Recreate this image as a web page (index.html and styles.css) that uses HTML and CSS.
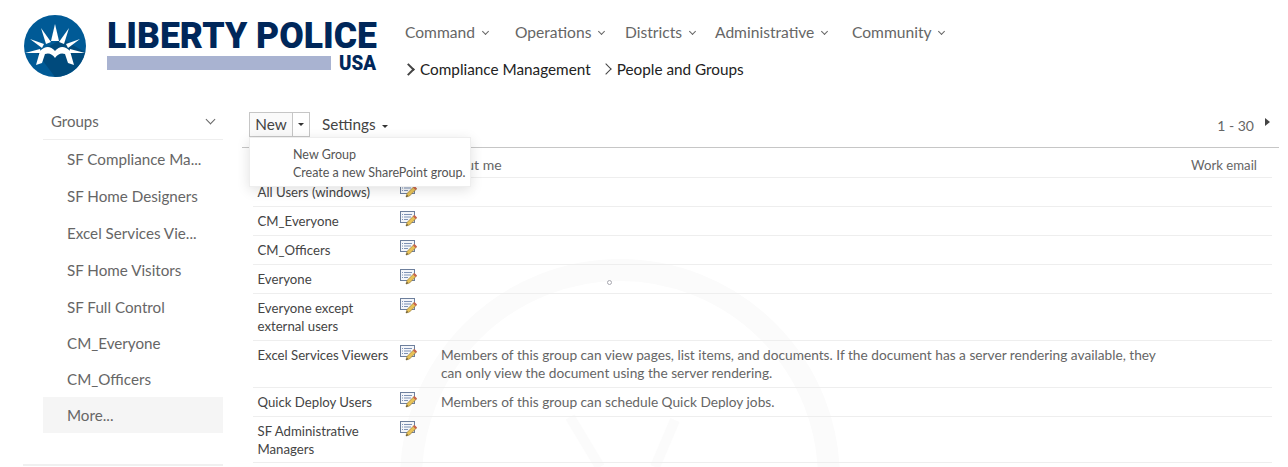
FILE: index.html
```html
<!DOCTYPE html>
<html lang="en">
  <head>
    <meta charset="UTF-8" />
    <title>People and Groups</title>
    <link rel="stylesheet" href="styles.css">
  </head>
  <body>
    <header class="top">
      <svg class="logo" width="380" height="72" viewBox="0 0 380 72">
        <circle cx="31" cy="31" r="31" fill="#005a96" />
        <path d="M13 38 L38 24 L61 37 A31 31 0 0 1 31 62 Z" fill="#004a7c" />
        <g fill="#fff">
          <path d="M31 9 L35 26 H27 Z" />
          <path d="M17 13 L27 27 L22 29 Z" />
          <path d="M45 13 L40 29 L35 27 Z" />
          <path d="M6 24 L20 29 L18 33 Z" />
          <path d="M56 24 L44 33 L42 29 Z" />
          <path d="M1 38 L16 34 L17 38 Z" />
          <path d="M61 38 L45 38 L46 34 Z" />
          <path d="M16 36 Q24 28 31 36 Q38 28 46 36 L50 50 L44 48 L41 39 Q35 37 31 43 Q27 37 21 39 L18 48 L12 50 Z" />
        </g>
        <text class="logo-name" x="83" y="33" textLength="270" lengthAdjust="spacingAndGlyphs">LIBERTY POLICE</text>
        <rect x="83" y="41" width="224" height="14" fill="#a9b3d1" />
        <text class="logo-usa" x="315" y="55" textLength="37" lengthAdjust="spacingAndGlyphs">USA</text>
      </svg>
      <div class="top-nav">
        <nav class="menu">
          <a class="menu-item w-command">Command <span class="caret"></span></a>
          <a class="menu-item w-operations">Operations <span class="caret"></span></a>
          <a class="menu-item w-districts">Districts <span class="caret"></span></a>
          <a class="menu-item w-admin">Administrative <span class="caret"></span></a>
          <a class="menu-item">Community <span class="caret"></span></a>
        </nav>
        <div class="crumbs">
          <span class="crumb-arrow thick"></span><span class="crumb">Compliance Management</span>
          <span class="crumb-arrow"></span><span class="crumb">People and Groups</span>
        </div>
      </div>
    </header>

    <div class="main">
      <aside class="side">
        <div class="side-head">Groups <span class="caret big"></span></div>
        <ul class="side-list">
          <li>SF Compliance Ma...</li>
          <li>SF Home Designers</li>
          <li>Excel Services Vie...</li>
          <li>SF Home Visitors</li>
          <li>SF Full Control</li>
          <li class="short">CM_Everyone</li>
          <li class="short">CM_Officers</li>
          <li class="short active">More...</li>
        </ul>
        <div class="side-rule"></div>
      </aside>

      <section class="content">
        <svg class="watermark" width="560" height="370" viewBox="0 0 560 370">
          <circle cx="308" cy="382" r="209" fill="none" stroke="#fbfbfb" stroke-width="22" />
          <path d="M258 320 L288 370 M363 323 L343 370" stroke="#fbfbfb" stroke-width="10" fill="none" />
        </svg>

        <div class="toolbar">
          <div class="split">
            <span class="split-main">New</span><span class="split-drop"><i class="tri"></i></span>
          </div>
          <span class="settings">Settings <i class="tri"></i></span>
          <span class="paging">1 - 30</span><i class="tri-right"></i>
        </div>

        <div class="popup">
          <div>New Group</div>
          <div>Create a new SharePoint group.</div>
        </div>

        <table class="groups">
          <tr class="head">
            <th class="c-name"></th>
            <th class="c-icon"></th>
            <th class="c-about">About me</th>
            <th class="c-email">Work email</th>
          </tr>
          <tr>
            <td>All Users (windows)</td>
            <td><svg class="edit"><use href="#edit-icon" /></svg></td>
            <td></td><td></td>
          </tr>
          <tr>
            <td>CM_Everyone</td>
            <td><svg class="edit"><use href="#edit-icon" /></svg></td>
            <td></td><td></td>
          </tr>
          <tr>
            <td>CM_Officers</td>
            <td><svg class="edit"><use href="#edit-icon" /></svg></td>
            <td></td><td></td>
          </tr>
          <tr>
            <td>Everyone</td>
            <td><svg class="edit"><use href="#edit-icon" /></svg></td>
            <td></td><td></td>
          </tr>
          <tr>
            <td>Everyone except<br />external users</td>
            <td><svg class="edit"><use href="#edit-icon" /></svg></td>
            <td></td><td></td>
          </tr>
          <tr>
            <td>Excel Services Viewers</td>
            <td><svg class="edit"><use href="#edit-icon" /></svg></td>
            <td class="desc">Members of this group can view pages, list items, and documents. If the document has a server rendering available, they can only view the document using the server rendering.</td>
            <td></td>
          </tr>
          <tr>
            <td>Quick Deploy Users</td>
            <td><svg class="edit"><use href="#edit-icon" /></svg></td>
            <td class="desc">Members of this group can schedule Quick Deploy jobs.</td>
            <td></td>
          </tr>
          <tr>
            <td>SF Administrative<br />Managers</td>
            <td><svg class="edit"><use href="#edit-icon" /></svg></td>
            <td></td><td></td>
          </tr>
        </table>
        <span class="spinner"></span>
      </section>
    </div>

    <svg width="0" height="0" class="defs">
      <symbol id="edit-icon" viewBox="0 0 17 16">
        <rect x="0.5" y="0.5" width="14" height="11" fill="#f4f6fa" stroke="#6d7f9c" />
        <path d="M2 3.5h1M4 3.5h8M2 6h1M4 6h7M2 8.5h1M4 8.5h4" stroke="#7f93b5" />
        <path d="M6 15 L7 11.5 L14 4.5 L16.5 7 L9.5 14 Z" fill="#e8c257" stroke="#8a6d2c" stroke-width="0.6" />
        <path d="M13 5.5 L14.5 4 L17 6.5 L15.5 8 Z" fill="#c8634f" />
        <path d="M6 15 L7 13 L8 14 Z" fill="#333" />
      </symbol>
    </svg>
  </body>
</html>
```

FILE: styles.css
```css
html,
body {
  height: 467px;
  overflow: hidden;
}

body {
  margin: 0;
  background: #fff;
  font-family: Lato, sans-serif;
  color: #666;
}

.defs {
  position: absolute;
}

.top {
  display: flex;
  height: 97px;
}

.logo {
  margin: 15px 1px 0 24px;
  flex: none;
}

.logo-name {
  font-family: Roboto, sans-serif;
  font-weight: 900;
  font-size: 37px;
  fill: #00275a;
}

.logo-usa {
  font-family: Roboto, sans-serif;
  font-weight: 900;
  font-size: 20px;
  fill: #00275a;
}

.top-nav {
  padding-top: 21px;
}

.menu {
  display: flex;
  height: 37px;
  font-size: 15.6px;
  line-height: 22px;
  color: #666;
}

.menu-item {
  display: block;
  width: 131px;
}

.menu-item.w-command,
.menu-item.w-operations {
  width: 110px;
}

.w-districts {
  width: 90px;
}

.w-admin {
  width: 137px;
}

.caret {
  display: inline-block;
  width: 4px;
  height: 4px;
  margin: 0 0 4px 4px;
  border-right: 1px solid #666;
  border-bottom: 1px solid #666;
  transform: rotate(45deg);
}

.caret.big {
  width: 6px;
  height: 6px;
  margin-left: auto;
  margin-right: 9px;
}

.crumbs {
  display: flex;
  align-items: center;
  font-size: 15.3px;
  line-height: 22px;
  color: #222;
}

.crumb {
  margin-right: 12px;
}

.crumb-arrow {
  width: 7px;
  height: 7px;
  margin: 0 7px 0 -1px;
  border-top: 1px solid #444;
  border-right: 1px solid #444;
  transform: rotate(45deg);
}

.crumb-arrow.thick {
  border-width: 2px;
}

.main {
  display: flex;
}

.side {
  flex: none;
  width: 200px;
  margin-left: 23px;
}

.side-head {
  display: flex;
  align-items: center;
  height: 43px;
  box-sizing: border-box;
  padding: 6px 0 0 8px;
  margin-left: 20px;
  border-bottom: 1px solid #eee;
  font-size: 15px;
}

.side-list {
  list-style: none;
  margin: 0;
  padding: 0 0 0 20px;
  font-size: 15.2px;
}

.side-list li {
  height: 37px;
  line-height: 38px;
  padding-left: 24px;
}

.side-list li.short {
  height: 36px;
  line-height: 36px;
}

.side-list li.active {
  background: #f5f5f5;
}

.side-rule {
  margin-top: 31px;
  border-top: 2px solid #f0f0f0;
}

.content {
  position: relative;
  flex: 1;
  margin-left: 19px;
  margin-right: 9px;
  font-size: 13.2px;
}

.watermark {
  position: absolute;
  left: 70px;
  top: 0;
}

.toolbar {
  position: relative;
  display: flex;
  align-items: flex-start;
  height: 51px;
  padding: 15px 0 0 7px;
  border-bottom: 1px solid #c6c6c6;
  box-sizing: border-box;
  font-size: 15.3px;
  color: #444;
}

.split {
  display: flex;
  height: 25px;
  border: 1px solid #c6c6c6;
  box-sizing: border-box;
  line-height: 22px;
}

.split-main {
  width: 42px;
  text-align: center;
  background: #fafafa;
}

.split-drop {
  display: flex;
  align-items: center;
  justify-content: center;
  width: 16px;
  border-left: 1px solid #c6c6c6;
}

.tri {
  display: inline-block;
  vertical-align: middle;
  border: 3px solid transparent;
  border-top: 3px solid #333;
  border-bottom: 0;
}

.settings {
  margin-left: 12px;
  line-height: 25px;
}

.settings .tri {
  margin-left: 2px;
}

.paging {
  margin-left: auto;
  margin-right: 11px;
  line-height: 28px;
  font-size: 14px;
  color: #666;
}

.tri-right {
  margin: 6px 9px 0 0;
  border: 4px solid transparent;
  border-left: 5px solid #444;
  border-right: 0;
}

.popup {
  position: absolute;
  left: 7px;
  top: 40px;
  z-index: 2;
  width: 222px;
  height: 50px;
  box-sizing: border-box;
  padding: 8px 0 0 43px;
  background: #fff;
  border: 1px solid #eee;
  box-shadow: 0 3px 12px rgba(0, 0, 0, 0.12);
  font-size: 12.5px;
  line-height: 18px;
  color: #555;
  white-space: nowrap;
}

.groups {
  position: relative;
  width: 1019px;
  margin-left: 11px;
  border-collapse: collapse;
  table-layout: fixed;
}

.groups td,
.groups th {
  box-sizing: border-box;
  padding: 5px 0 5px 4.5px;
  border-bottom: 1px solid #eee;
  font-weight: 400;
  line-height: 18px;
  text-align: left;
  vertical-align: top;
  color: #444;
}

.groups th {
  padding-top: 8px;
  padding-bottom: 3px;
}

.groups td.desc,
.groups th {
  padding-left: 1px;
  color: #666;
}

.groups td.desc {
  padding-right: 20px;
  font-size: 13.7px;
}

.groups td:nth-child(2) {
  padding: 4px 0 0;
}

.groups tr:last-child td {
  padding-bottom: 4px;
}

.c-about {
  font-size: 14px;
}

.c-name {
  width: 147px;
}

.c-icon {
  width: 40px;
}

.c-email {
  width: 82px;
}

.edit {
  display: block;
  width: 17px;
  height: 16px;
}

.spinner {
  position: absolute;
  left: 365px;
  top: 183px;
  width: 5px;
  height: 5px;
  border: 1px solid #a8a8b0;
  border-radius: 50%;
  box-sizing: border-box;
}
```
